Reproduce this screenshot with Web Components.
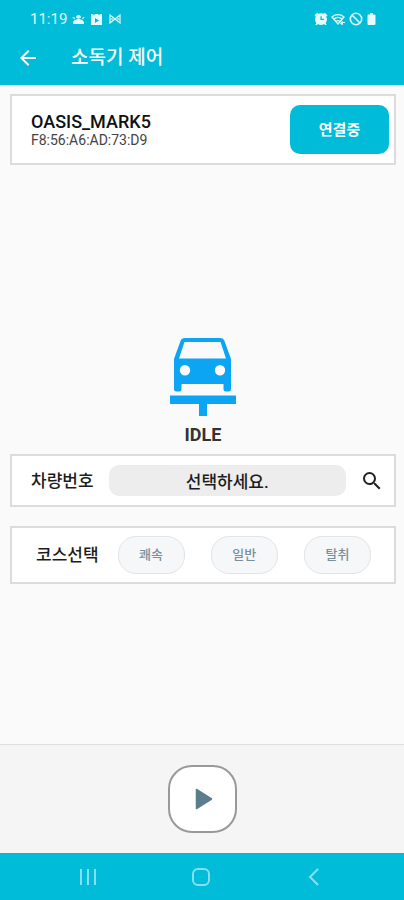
<!DOCTYPE html>
<html lang="ko">
<head>
<meta charset="utf-8">
<meta name="viewport" content="width=device-width, initial-scale=1">
<title>소독기 제어</title>
<style>
  body { margin: 0; font-family: Roboto, "Noto Sans CJK KR", sans-serif; color: #1c1c1c; background: #fafafa; }
</style>
</head>
<body>
<sterilizer-app></sterilizer-app>
<script>
const define = (name, html) => {
  const template = document.createElement("template");
  template.innerHTML = html;
  customElements.define(name, class extends HTMLElement {
    constructor() {
      super();
      this.attachShadow({ mode: "open" }).append(template.content.cloneNode(true));
    }
  });
};

define("status-bar", `
<style>
  :host { display: flex; justify-content: space-between; align-items: center; height: 38px; padding: 0 27px 0 30px; color: #e4fafd; font-size: 15px; line-height: 20px; box-sizing: border-box; }
  div { display: flex; align-items: center; gap: 5px; }
  .right { gap: 3px; }
  svg { display: block; fill: currentColor; }
</style>
<div>
  <span>11:19</span>
  <svg width="13" height="12" viewBox="0 0 13 12" aria-hidden="true"><path d="M1 11V9l2-2.500 1 .5a2.700 2.700 0 0 1 5 0l1-.5L12 9v2zM4 4.500a2.500 2.500 0 0 1 5 0l-1 .5H5zM1 4l2 1-.5 1L.5 5zM12 4l-2 1 .5 1 2-1z"/></svg>
  <svg width="13" height="13" viewBox="0 0 13 13" aria-hidden="true"><path fill-rule="evenodd" d="M1 1h2l1 1.500 1-1.500h3l1 1.500 1-1.500h2v11H1zM5 5v5l4-2.500z"/></svg>
  <svg width="14" height="12" viewBox="0 0 14 12" aria-hidden="true"><g fill="none" stroke="currentColor" stroke-width="1.200"><path d="M2 2l10 8V2L2 10z"/><path d="M4 5v2M10 5v2"/></g></svg>
</div>
<div class="right">
  <svg width="14" height="14" viewBox="0 0 13 13" aria-hidden="true"><path fill-rule="evenodd" d="M.5 3L3 .7l1.200 1a5.500 5.500 0 0 1 4.600 0l1.200-1L12.500 3l-1.200 1.300a5.500 5.500 0 0 1-.4 5.900l.8 1.800h-1.500l-.7-.8a5.500 5.500 0 0 1-6 0l-.7.8H1.300l.8-1.800a5.500 5.500 0 0 1-.4-5.900zM6 4v3.500h3.200v-1.200h-2V4z"/></svg>
  <svg width="15" height="13" viewBox="0 0 15 13" aria-hidden="true"><g fill="none" stroke="currentColor" stroke-width="1.300"><path d="M1 4a9 9 0 0 1 12 0L7 11zM3 6a6 6 0 0 1 8 0M5 8.500a3 3 0 0 1 4 0"/></g><path d="M10 9l2-1v1h2v1h-2v2l-3-1z"/></svg>
  <svg width="14" height="14" viewBox="0 0 14 14" aria-hidden="true"><g fill="none" stroke="currentColor" stroke-width="1.600"><circle cx="7" cy="7" r="5.700"/><path d="M3.200 3.200l7.600 7.600"/></g></svg>
  <svg width="11" height="14" viewBox="0 0 11 14" aria-hidden="true"><path d="M4 1h3v1.500h1.500q1 0 1 1V12q0 1-1 1h-6q-1 0-1-1V3.500q0-1 1-1H4z"/></svg>
</div>`);

define("app-bar", `
<style>
  :host { display: flex; align-items: center; gap: 31px; height: 40px; padding: 0 16px; color: #fff; }
  button { display: flex; padding: 0; border: 0; background: none; color: inherit; }
  h1 { margin: 0; font-size: 19px; line-height: 24px; font-weight: 500; }
</style>
<button type="button" aria-label="뒤로"><svg width="24" height="24" viewBox="0 0 24 24" fill="currentColor"><path d="M20 11H7.830l5.590-5.590L12 4l-8 8 8 8 1.410-1.410L7.830 13H20z"/></svg></button>
<h1><slot></slot></h1>`);

define("outlined-card", `
<style>
  :host { display: flex; align-items: center; box-sizing: border-box; background: #fff; border: 2px solid #dcdcdc; }
</style>
<slot></slot>`);

define("device-info", `
<style>
  :host { display: flex; flex: 1; align-items: center; justify-content: space-between; padding: 9px 5px 9px 19px; }
  h2, p { margin: 0; }
  h2 { font-size: 18px; line-height: 20px; font-weight: 500; color: #111; }
  p { font-size: 14px; line-height: 16px; color: #444; }
  button { width: 99px; height: 49px; padding: 0; border: 0; border-radius: 10px; background: #00bcd9; color: #fff; font: 700 15px/20px Roboto, "Noto Sans CJK KR", sans-serif; }
</style>
<div><h2><slot name="name"></slot></h2><p><slot name="address"></slot></p></div>
<button type="button"><slot name="state"></slot></button>`);

define("machine-status", `
<style>
  :host { display: flex; flex: 1; flex-direction: column; align-items: center; justify-content: flex-end; padding-bottom: 7px; }
  svg { display: block; fill: #0ca5f3; }
  p { margin: 7px 0 0; font-size: 18px; line-height: 24px; font-weight: 700; color: #333; }
</style>
<svg width="66" height="78" viewBox="0 0 66 78" aria-hidden="true">
  <path fill-rule="evenodd" d="M4 21L10.500 3Q11.500 0 15 0H50Q53.500 0 54.500 3L61 21V51Q61 53.500 58.500 53.500H56Q53.500 53.500 53.500 51V46H11.500V51Q11.500 53.500 9 53.500H6.500Q4 53.500 4 51ZM9 20.500H56L50.500 4H14.500ZM15 27A5.200 5.200 0 1 0 15 37.400A5.200 5.200 0 1 0 15 27ZM50 27A5.200 5.200 0 1 0 50 37.400A5.200 5.200 0 1 0 50 27Z"/>
  <path d="M0 57.500H66V66H37V78H29V66H0Z"/>
</svg>
<p><slot></slot></p>`);

define("vehicle-picker", `
<style>
  :host { display: flex; flex: 1; align-items: center; min-width: 0; padding: 9px 10px 9px 19px; }
  label { font-size: 17px; line-height: 24px; font-weight: 500; margin-right: 15px; white-space: nowrap; }
  input { flex: 1; min-width: 0; height: 31px; box-sizing: border-box; border: 0; padding: 0 8px; border-radius: 10px; background: #ededed; text-align: center; font: 500 17px/24px Roboto, "Noto Sans CJK KR", sans-serif; color: #1c1c1c; }
  button { display: flex; margin-left: 14px; padding: 0; border: 0; background: none; color: #222; }
</style>
<label for="vehicle">차량번호</label>
<input id="vehicle" type="text" value="선택하세요." readonly>
<button type="button" aria-label="검색"><svg width="24" height="24" viewBox="0 0 24 24" fill="currentColor"><path d="M15.500 14h-.79l-.28-.27A6.471 6.471 0 0 0 16 9.500 6.500 6.500 0 1 0 9.500 16c1.610 0 3.090-.59 4.230-1.570l.27.28v.79l5 4.990L20.490 19l-4.990-5zm-6 0C7.010 14 5 11.990 5 9.500S7.010 5 9.500 5 14 7.010 14 9.500 11.990 14 9.500 14z"/></svg></button>`);

define("course-picker", `
<style>
  :host { display: flex; flex: 1; align-items: center; padding: 8px 23px 8px 24px; }
  h2 { margin: 0 19px 0 0; font-size: 17px; line-height: 24px; font-weight: 500; white-space: nowrap; }
  div { display: flex; flex: 1; justify-content: space-between; }
</style>
<h2 id="title">코스선택</h2>
<div role="group" aria-labelledby="title"><slot></slot></div>`);

define("course-option", `
<style>
  :host { display: block; }
  button { display: block; width: 67px; height: 38px; padding: 0; border: 1px solid #e2e4e5; border-radius: 18px; background: #f5f7f8; color: #78909c; font: 500 13px/20px Roboto, "Noto Sans CJK KR", sans-serif; }
</style>
<button type="button"><slot></slot></button>`);

define("start-panel", `
<style>
  :host { display: flex; justify-content: center; padding: 20px 0; background: #f5f5f5; border-top: 1px solid #dfdfdf; }
  button { display: flex; align-items: center; justify-content: center; width: 69px; height: 68px; padding: 0 0 0 4px; border: 2px solid #999; border-radius: 24px; background: #fff; box-sizing: border-box; }
</style>
<button type="button" aria-label="시작"><svg width="18" height="22" viewBox="0 0 18 22"><path d="M1.500 1.500L16.500 11L1.500 20.500Z" fill="#5b7d8c" stroke="#5b7d8c" stroke-width="1.500" stroke-linejoin="round"/></svg></button>`);

define("system-nav", `
<style>
  :host { display: flex; justify-content: space-between; align-items: center; height: 47px; padding: 0 78px 0 76px; background: #00bcd9; color: #86e1ef; }
  button { display: flex; padding: 0; border: 0; background: none; color: inherit; }
  svg { fill: none; stroke: currentColor; stroke-width: 2; }
</style>
<button type="button" aria-label="최근 앱"><svg width="24" height="24" viewBox="0 0 24 24"><path d="M5 4v16M12 4v16M19 4v16"/></svg></button>
<button type="button" aria-label="홈"><svg width="24" height="24" viewBox="0 0 24 24"><rect x="4" y="4" width="16" height="16" rx="5"/></svg></button>
<button type="button" aria-label="이전"><svg width="24" height="24" viewBox="0 0 24 24"><path d="M16 4L8 12l8 8"/></svg></button>`);

define("sterilizer-app", `
<style>
  :host { display: flex; flex-direction: column; min-height: 100vh; }
  header { background: #00bcd9; padding-bottom: 7px; }
  main { flex: 1; display: flex; flex-direction: column; padding: 9px 8px 160px 10px; }
  .gap { margin-top: 19px; }
</style>
<header>
  <status-bar></status-bar>
  <app-bar>소독기 제어</app-bar>
</header>
<main>
  <outlined-card>
    <device-info><span slot="name">OASIS_MARK5</span><span slot="address">F8:56:A6:AD:73:D9</span><span slot="state">연결중</span></device-info>
  </outlined-card>
  <machine-status>IDLE</machine-status>
  <outlined-card><vehicle-picker></vehicle-picker></outlined-card>
  <outlined-card class="gap">
    <course-picker><course-option>쾌속</course-option><course-option>일반</course-option><course-option>탈취</course-option></course-picker>
  </outlined-card>
</main>
<start-panel></start-panel>
<system-nav></system-nav>`);
</script>
</body>
</html>
